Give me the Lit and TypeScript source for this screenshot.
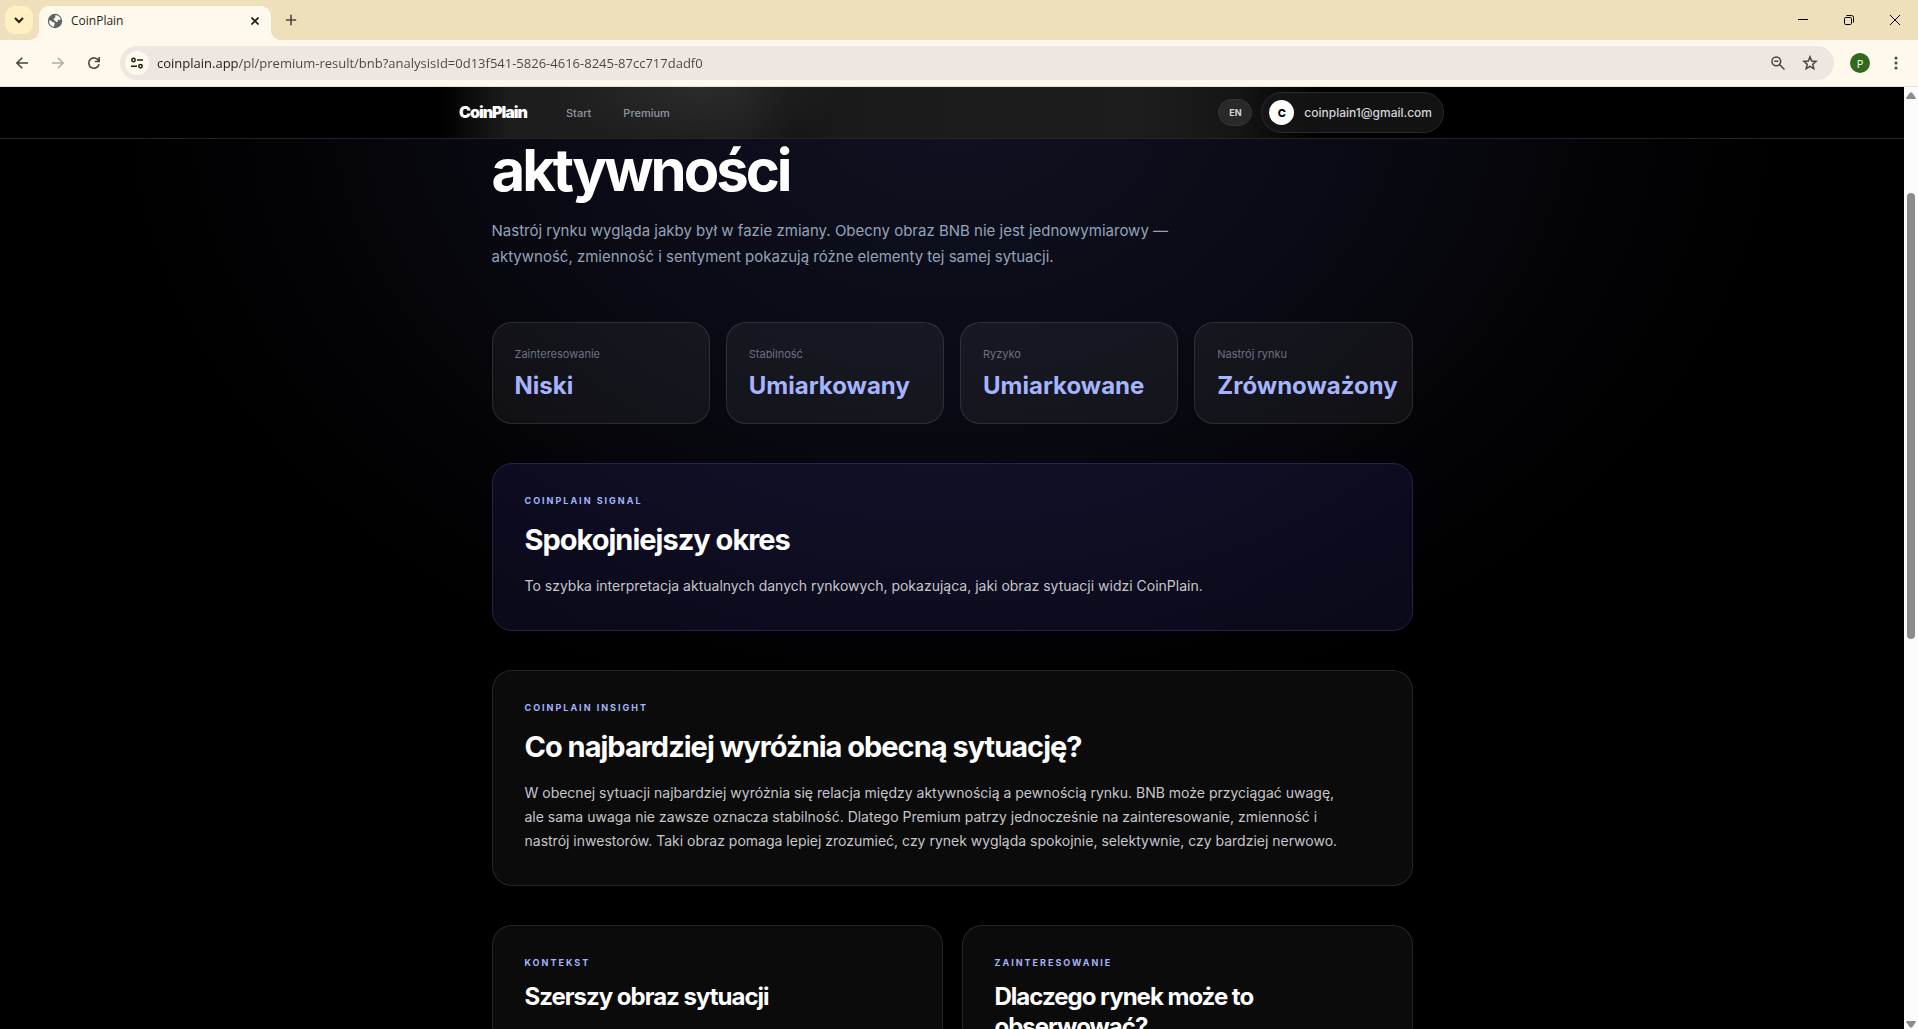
import { LitElement, html, css, svg } from "lit";
import { customElement, property } from "lit/decorators.js";
import { classMap } from "lit/directives/class-map.js";

const globe = svg`<svg viewBox="0 0 16 16" width="16" height="16" aria-hidden="true"><circle cx="8" cy="8" r="7.2" fill="#5f6368"/><path d="M8.7 2.1c2.300.2 4.300 1.700 5.100 3.900-.4.9-1 1.100-1.900.9-1-.2-1.400.4-1.200 1.200.2.900-.6 1.200-1.400.8-.9-.5-.6-1.300-1.600-1.500-.8-.2-1.300-.8-1-1.600.2-.7 1-.5 1.400-1 .4-.6-.2-1.500.6-2.700ZM2 7.400c1.400-.1 2.400.400 3.200 1.300.700.7 1.900.500 2.400 1.300.5.9-.500 1.400-.5 2.300 0 .7.300 1.100-.2 1.500C4.100 13.300 1.900 10.800 2 7.400Z" fill="#fff9ed"/></svg>`;

@customElement("browser-chrome")
export class BrowserChrome extends LitElement {
  static styles = css`
    :host {
      display: block;
      font-family: "Open Sans", "Noto Sans", sans-serif;
      color: #1f1c13;
    }
    button {
      display: grid;
      place-items: center;
      padding: 0;
      border: 0;
      background: none;
      color: inherit;
      font: inherit;
    }
    .strip {
      display: flex;
      align-items: stretch;
      height: 40px;
      background: #ede0bb;
    }
    .search {
      width: 28px;
      height: 28px;
      margin: 6px 6px 6px 5px;
      border-radius: 10px;
      background: #fff0c3;
    }
    .tab {
      position: relative;
      display: flex;
      align-items: center;
      gap: 8px;
      box-sizing: border-box;
      width: 232px;
      margin-top: 6px;
      padding: 0 8px 5px 8px;
      border-radius: 10px 10px 0 0;
      background: #fff9ed;
      font-size: 12px;
    }
    .tab::before,
    .tab::after {
      content: "";
      position: absolute;
      bottom: 0;
      width: 10px;
      height: 10px;
    }
    .tab::before {
      right: 100%;
      background: radial-gradient(circle at 0 0, transparent 10px, #fff9ed 10px);
    }
    .tab::after {
      left: 100%;
      background: radial-gradient(circle at 100% 0, transparent 10px, #fff9ed 10px);
    }
    .title {
      flex: 1;
    }
    .close {
      width: 16px;
      height: 16px;
    }
    .add {
      width: 28px;
      margin-left: 6px;
      color: #4b4639;
    }
    .window {
      display: flex;
      margin-left: auto;
    }
    .window button {
      width: 46px;
    }
    .bar {
      display: flex;
      align-items: center;
      height: 46px;
      border-bottom: 1px solid #eadfce;
      background: #fff9ed;
      color: #4b4639;
    }
    .nav {
      width: 36px;
      height: 36px;
    }
    .nav:first-child {
      margin-left: 4px;
    }
    .nav:disabled {
      color: #b5afa2;
    }
    .address {
      display: flex;
      flex: 1;
      align-items: center;
      height: 34px;
      margin-left: 8px;
      padding: 0 8px 0 5px;
      border-radius: 17px;
      background: #eee6e0;
    }
    .site {
      width: 24px;
      height: 24px;
      border-radius: 50%;
      background: #fff9ed;
    }
    .url {
      flex: 1;
      min-width: 0;
      margin-left: 8px;
      padding: 0;
      border: 0;
      outline: 0;
      background: linear-gradient(90deg, #1f1c13 81px, #4b4639 81px);
      background-clip: text;
      -webkit-background-clip: text;
      color: transparent;
      font: 13px "Open Sans", "Noto Sans", sans-serif;
    }
    .tool {
      width: 32px;
      height: 32px;
    }
    .profile {
      width: 20px;
      height: 20px;
      margin: 0 16px 0 16px;
      border-radius: 50%;
      background: #33691e;
      color: #fff;
      font-size: 11px;
    }
    .menu {
      width: 20px;
      height: 32px;
      margin-right: 12px;
    }
  `;

  render() {
    return html`
      <div class="strip">
        <button class="search" aria-label="Search tabs">
          <svg viewBox="0 0 10 8" width="10" height="8" fill="none" stroke="currentColor" stroke-width="2"><path d="M1 2l4 4 4-4" /></svg>
        </button>
        <div class="tab">
          ${globe}<span class="title">CoinPlain</span>
          <button class="close" aria-label="Close tab">
            <svg viewBox="0 0 8 8" width="8" height="8" stroke="currentColor" stroke-width="1.6"><path d="M.5.5l7 7M7.500.5l-7 7" /></svg>
          </button>
        </div>
        <button class="add" aria-label="New tab">
          <svg viewBox="0 0 12 12" width="12" height="12" stroke="currentColor" stroke-width="1.600"><path d="M6 .8v10.400M.8 6h10.400" /></svg>
        </button>
        <div class="window">
          <button aria-label="Minimize"><svg viewBox="0 0 10 10" width="10" height="10" stroke="#000"><path d="M0 4.500h10" /></svg></button>
          <button aria-label="Restore"><svg viewBox="0 0 10 10" width="10" height="10" fill="none" stroke="#000"><rect x=".5" y="2.500" width="7" height="7" rx="1.200" /><path d="M2.500.5h5a2 2 0 0 1 2 2v5" /></svg></button>
          <button aria-label="Close window"><svg viewBox="0 0 10 10" width="10" height="10" stroke="#000"><path d="M0 0l10 10M10 0L0 10" /></svg></button>
        </div>
      </div>
      <div class="bar">
        <button class="nav" aria-label="Back">
          <svg viewBox="0 0 12 12" width="12" height="12" fill="none" stroke="currentColor" stroke-width="1.600"><path d="M12 6H1.200M6.200.7L.9 6l5.300 5.300" /></svg>
        </button>
        <button class="nav" aria-label="Forward" disabled>
          <svg viewBox="0 0 12 12" width="12" height="12" fill="none" stroke="currentColor" stroke-width="1.600"><path d="M0 6h10.800M5.800.7L11.100 6l-5.300 5.300" /></svg>
        </button>
        <button class="nav" aria-label="Reload">
          <svg viewBox="0 0 12 12" width="12" height="12" fill="none" stroke="currentColor" stroke-width="1.600"><path d="M11.100 7.200A5.200 5.200 0 1 1 10.600 3.600L11 4.500M11.200 0v4.500H6.800" /></svg>
        </button>
        <div class="address">
          <button class="site" aria-label="Site information">
            <svg viewBox="0 0 12 12" width="12" height="12" fill="none" stroke="#1f1c13" stroke-width="1.500"><circle cx="2.500" cy="3" r="1.700" /><path d="M6 3h6M0 9.200h6" /><circle cx="9.500" cy="9.200" r="1.700" /></svg>
          </button>
          <input class="url" type="text" aria-label="Address" value="coinplain.app/pl/premium-result/bnb?analysisId=0d13f541-5826-4616-8245-87cc717dadf0" />
          <button class="tool" aria-label="Zoom">
            <svg viewBox="0 0 14 14" width="14" height="14" fill="none" stroke="currentColor" stroke-width="1.500"><circle cx="5.300" cy="5.300" r="4.400" /><path d="M8.500 8.500l5 5M3.200 5.300h4.200" /></svg>
          </button>
          <button class="tool" aria-label="Bookmark">
            <svg viewBox="0 0 16 16" width="16" height="16" fill="none" stroke="currentColor" stroke-width="1.500"><path d="M8 1.900l1.700 4.100 4.400.4-3.300 2.900 1 4.300L8 11.300l-3.800 2.300 1-4.300-3.300-2.900 4.400-.4z" /></svg>
          </button>
        </div>
        <button class="profile" aria-label="Profile">P</button>
        <button class="menu" aria-label="Menu">
          <svg viewBox="0 0 4 14" width="4" height="14" fill="currentColor"><circle cx="2" cy="2" r="1.500" /><circle cx="2" cy="7" r="1.500" /><circle cx="2" cy="12" r="1.500" /></svg>
        </button>
      </div>
    `;
  }
}

@customElement("site-header")
export class SiteHeader extends LitElement {
  static styles = css`
    :host {
      display: block;
      border-bottom: 1px solid #242426;
      background:
        radial-gradient(150px 60px at 700px 0, rgba(255, 255, 255, 0.06), transparent),
        linear-gradient(90deg, #000 440px, #1d1d1d 510px, #1e1e1e 740px, #171717 790px, #1b1b1b 880px, #1d1d1d 1140px, #151515 1240px, #000 1320px);
    }
    .inner {
      display: flex;
      align-items: center;
      box-sizing: border-box;
      width: 100%;
      max-width: 1024px;
      height: 51px;
      margin: 0 auto;
      padding: 0 20px 0 19px;
    }
    a {
      text-decoration: none;
    }
    .logo {
      padding-bottom: 2px;
      color: #fff;
      font-size: 16px;
      font-weight: 900;
      letter-spacing: -1px;
    }
    nav {
      display: flex;
      flex: 1;
      gap: 32px;
      margin-left: 39px;
    }
    .link {
      color: #9096a2;
      font-size: 11px;
      font-weight: 500;
    }
    button {
      border: 1px solid #353537;
      color: #d4d4d8;
      font: inherit;
      font-size: 9px;
      font-weight: 700;
    }
    .lang {
      width: 34px;
      height: 27px;
      padding: 0;
      border-radius: 14px;
      background: #29292a;
    }
    .account {
      display: flex;
      align-items: center;
      gap: 10px;
      height: 41px;
      margin-left: 9px;
      padding: 0 11px 0 7px;
      border-color: #2a2a2b;
      border-radius: 21px;
      background: rgba(26, 26, 27, 0.7);
      font-size: 12px;
      font-weight: 500;
    }
    .avatar {
      display: grid;
      place-items: center;
      width: 25px;
      height: 25px;
      border-radius: 50%;
      background: #fff;
      color: #000;
      font-size: 11px;
      font-weight: 800;
    }
  `;

  render() {
    return html`
      <header class="inner">
        <a class="logo" href="#">CoinPlain</a>
        <nav>
          <a class="link" href="#start">Start</a>
          <a class="link" href="#premium">Premium</a>
        </nav>
        <button class="lang">EN</button>
        <button class="account"><span class="avatar">C</span>coinplain1@gmail.com</button>
      </header>
    `;
  }
}

@customElement("info-card")
export class InfoCard extends LitElement {
  @property() eyebrow = "";
  @property() heading = "";
  @property() text = "";
  @property({ type: Boolean }) accent = false;
  @property({ type: Boolean }) small = false;

  static styles = css`
    :host {
      display: block;
    }
    .card {
      box-sizing: border-box;
      height: 100%;
      padding: 31px 32px 32px;
      border: 1px solid rgba(255, 255, 255, 0.11);
      border-radius: 20px;
      background: rgba(255, 255, 255, 0.043);
    }
    .accent {
      border-color: #24234b;
      background: linear-gradient(180deg, rgba(79, 70, 200, 0.13), rgba(84, 76, 200, 0.13));
    }
    .eyebrow {
      margin: 0;
      color: #a5b4fc;
      font-size: 9px;
      font-weight: 700;
      line-height: 12px;
      letter-spacing: 2px;
    }
    h2 {
      margin: 15px 0 0;
      color: #fff;
      font-size: 29px;
      font-weight: 700;
      line-height: 36px;
      letter-spacing: -1px;
    }
    .small h2 {
      margin-top: 13px;
      font-size: 24px;
      line-height: 30px;
    }
    .text {
      max-width: 820px;
      margin: 16px 0 0;
      color: #c6c6cb;
      font-size: 14px;
      line-height: 24px;
    }
  `;

  render() {
    return html`
      <article class=${classMap({ card: true, accent: this.accent, small: this.small })}>
        <p class="eyebrow">${this.eyebrow}</p>
        <h2>${this.heading}</h2>
        ${this.text ? html`<p class="text">${this.text}</p>` : null}
      </article>
    `;
  }
}

const stats = [
  { label: "Zainteresowanie", value: "Niski" },
  { label: "Stabilność", value: "Umiarkowany" },
  { label: "Ryzyko", value: "Umiarkowane" },
  { label: "Nastrój rynku", value: "Zrównoważony" },
];

@customElement("app-root")
export class AppRoot extends LitElement {
  static styles = css`
    :host {
      display: flex;
      flex-direction: column;
      height: 100vh;
      overflow: hidden;
      font-family: Inter, "Liberation Sans", sans-serif;
    }
    .viewport {
      display: flex;
      flex: 1;
      min-height: 0;
    }
    .page {
      flex: 1;
      min-width: 0;
      overflow: hidden;
      background: radial-gradient(820px 630px at 50% 0, #101222 0%, #0e0f1d 20%, #0a0a14 50%, #040408 78%, #000 100%) #000;
    }
    main {
      display: grid;
      gap: 39px;
      width: 100%;
      max-width: 921px;
      margin: 0 auto;
    }
    h1 {
      margin: 0;
      color: #fff;
      font-size: 58px;
      font-weight: 700;
      line-height: 62px;
      letter-spacing: -3px;
    }
    .lead {
      max-width: 730px;
      margin: 17px 0 13px;
      color: #94a3b8;
      font-size: 15px;
      line-height: 26px;
    }
    .stats {
      display: grid;
      grid-template-columns: repeat(4, minmax(0, 1fr));
      gap: 16px;
      margin: 0;
    }
    .stat {
      padding: 23px 22px 21px;
      border: 1px solid rgba(255, 255, 255, 0.11);
      border-radius: 20px;
      background: rgba(255, 255, 255, 0.05);
      white-space: nowrap;
    }
    dt {
      color: #6b7280;
      font-size: 11px;
      line-height: 16px;
    }
    dd {
      margin: 8px 0 0;
      color: #a5b4fc;
      font-size: 24px;
      font-weight: 700;
      line-height: 32px;
    }
    .pair {
      display: grid;
      grid-template-columns: 1fr 1fr;
      gap: 19px;
    }
    .scroll {
      display: flex;
      flex-direction: column;
      align-items: center;
      box-sizing: border-box;
      width: 14px;
      padding: 5px 0 1px;
      background: #fcfcfc;
    }
    .thumb {
      flex: 446;
      width: 8px;
      border-radius: 4px;
      background: #8b8b8b;
    }
    .before {
      flex: 94;
    }
    .after {
      flex: 382;
    }
  `;

  render() {
    return html`
      <browser-chrome></browser-chrome>
      <div class="viewport">
        <div class="page">
          <site-header></site-header>
          <main>
            <section>
              <h1>aktywności</h1>
              <p class="lead">Nastrój rynku wygląda jakby był w fazie zmiany. Obecny obraz BNB nie jest jednowymiarowy — aktywność, zmienność i sentyment pokazują różne elementy tej samej sytuacji.</p>
            </section>
            <dl class="stats">
              ${stats.map((s) => html`<div class="stat"><dt>${s.label}</dt><dd>${s.value}</dd></div>`)}
            </dl>
            <info-card accent eyebrow="COINPLAIN SIGNAL" heading="Spokojniejszy okres" text="To szybka interpretacja aktualnych danych rynkowych, pokazująca, jaki obraz sytuacji widzi CoinPlain."></info-card>
            <info-card eyebrow="COINPLAIN INSIGHT" heading="Co najbardziej wyróżnia obecną sytuację?" text="W obecnej sytuacji najbardziej wyróżnia się relacja między aktywnością a pewnością rynku. BNB może przyciągać uwagę, ale sama uwaga nie zawsze oznacza stabilność. Dlatego Premium patrzy jednocześnie na zainteresowanie, zmienność i nastrój inwestorów. Taki obraz pomaga lepiej zrozumieć, czy rynek wygląda spokojnie, selektywnie, czy bardziej nerwowo."></info-card>
            <div class="pair">
              <info-card small eyebrow="KONTEKST" heading="Szerszy obraz sytuacji"></info-card>
              <info-card small eyebrow="ZAINTERESOWANIE" heading="Dlaczego rynek może to obserwować?"></info-card>
            </div>
          </main>
        </div>
        <div class="scroll" aria-hidden="true">
          <svg viewBox="0 0 10 7" width="10" height="7" fill="#8b8b8b"><path d="M4 .5h2L9.800 6v1H.2V6z" /></svg>
          <div class="before"></div>
          <div class="thumb"></div>
          <div class="after"></div>
          <svg viewBox="0 0 10 7" width="10" height="7" fill="#8b8b8b"><path d="M4 6.500h2L9.800 1V0H.2v1z" /></svg>
        </div>
      </div>
    `;
  }
}
